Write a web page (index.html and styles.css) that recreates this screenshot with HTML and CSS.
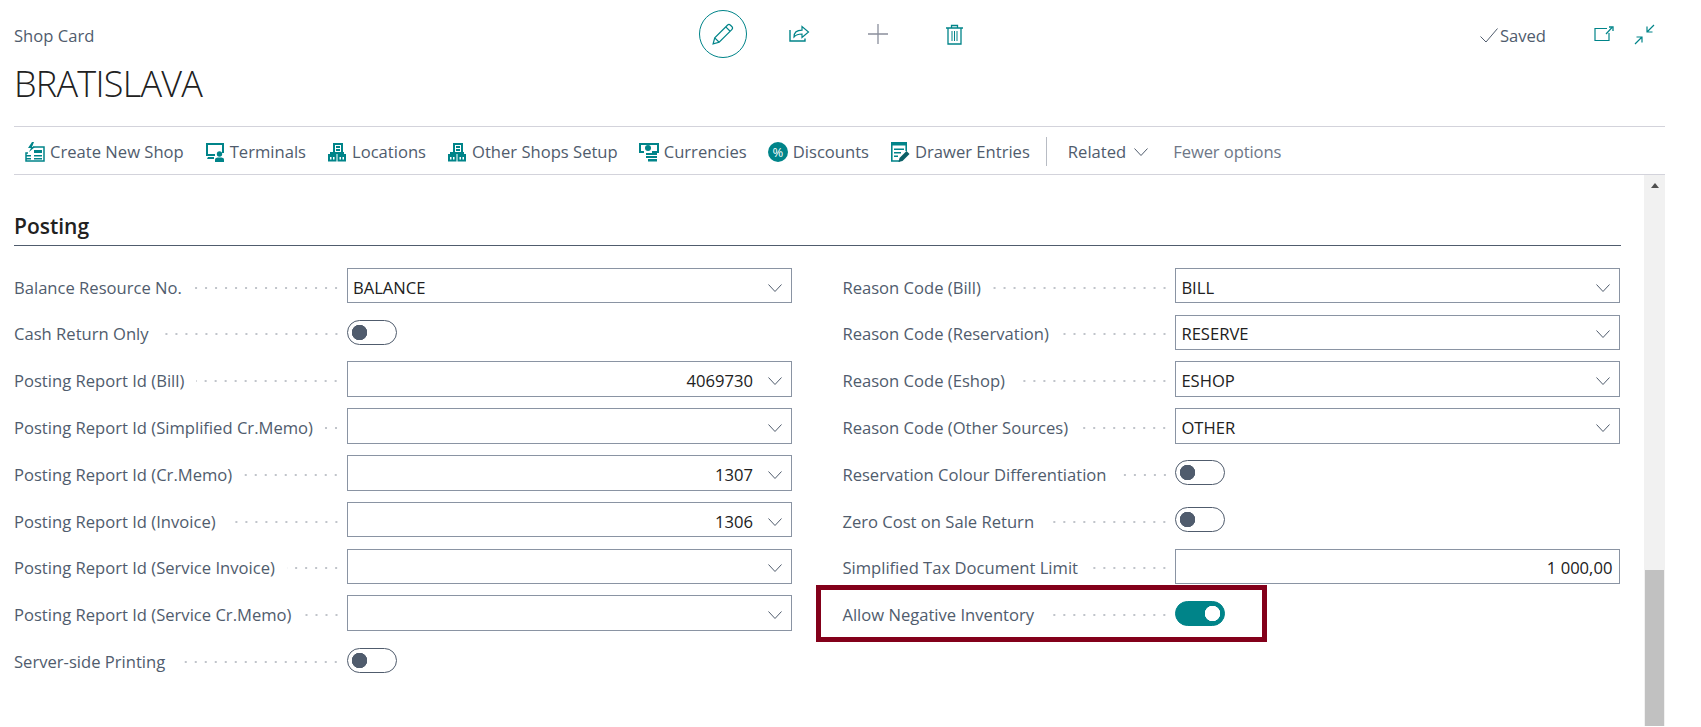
FILE: index.html
```html
<!DOCTYPE html>
<html lang="en">
<head>
  <meta charset="UTF-8">
  <title>Shop Card - BRATISLAVA</title>
  <link rel="stylesheet" href="styles.css">
</head>
<body>
  <svg class="sprite" width="0" height="0">
    <symbol id="chevron" viewBox="0 0 14 8"><path d="M.5.5 7 7.5 13.5.5" fill="none" stroke="currentColor" stroke-width="1"/></symbol>
    <symbol id="blocks" viewBox="0 0 20 20"><path d="M6 1h10v9h-2V3H8v7H6z" fill="currentColor"/><path d="M9 4h4v2H9zM9 7h4v2H9z" fill="currentColor"/><path d="M3 10h14v2H3z" fill="currentColor"/><path d="M1 12h8.500v7.500H1zM10.500 12H19v7.500h-8.500z" fill="currentColor"/><path d="M3 15h1.500v2.500H3zM6 15h1.500v2.500H6zM12.500 15H14v2.500h-1.500zM15.500 15H17v2.500h-1.500z" fill="#fff"/></symbol>
  </svg>

  <!-- Title bar -->
  <header class="page-head">
    <div class="head-left">
      <div class="caption">Shop Card</div>
      <h1>BRATISLAVA</h1>
    </div>
    <div class="head-actions">
      <span class="edit-btn">
        <svg width="22" height="22" viewBox="0 0 20 20" fill="none" stroke="currentColor" stroke-width="1.1"><path d="M1 19l1.5-5.5L14 2a2 2 0 0 1 2.8 0L18 3.2a2 2 0 0 1 0 2.8L6.5 17.5zM12.5 3.5l4 4M2.5 13.5l4 4"/></svg>
      </span>
      <svg class="act-share" width="21" height="18" viewBox="0 0 21 18" fill="none" stroke="currentColor" stroke-width="1.4"><path d="M1 6v11h15v-2.500"/><path d="M5 13c0-4.500 3-6.800 8-6.800V2.500l6.500 5.500L13 13.500V10c-4 0-6 .7-8 3z" stroke-width="1.200"/></svg>
      <svg class="act-plus" width="20" height="20" viewBox="0 0 20 20" stroke="#8a8f9c" stroke-width="1.300"><path d="M0 10h20M10 0v20"/></svg>
      <svg class="act-trash" width="17" height="21" viewBox="0 0 17 21" fill="none" stroke="currentColor" stroke-width="1.300"><path d="M0 4h17M5.500 4V1.500h6V4M2 4v16h13V4"/><path d="M6 7v10M8.500 7v10M11 7v10" stroke-width="1"/></svg>
    </div>
    <div class="head-right">
      <span class="saved">
        <svg width="18" height="15" viewBox="0 0 18 15" fill="none" stroke="currentColor" stroke-width="1"><path d="M.5 8.500 6 14 17.500.5"/></svg>
        Saved
      </span>
      <svg class="win-open" width="20" height="15" viewBox="0 0 20 15" fill="none" stroke="currentColor" stroke-width="1.200"><path d="M13 2.500H1v12h14V7"/><path d="M12 8l6-6.500"/><path d="M15 1h4v4" stroke-width="1.300"/></svg>
      <svg class="win-collapse" width="21" height="21" viewBox="0 0 21 21" fill="none" stroke="currentColor" stroke-width="1.200"><path d="M20 1l-7 7M13 2.500V8h5.500"/><path d="M1 20l7-7M8 18.500V13H2.500"/></svg>
    </div>
  </header>

  <!-- Action bar -->
  <nav class="toolbar">
    <span class="tool">
      <svg width="20" height="20" viewBox="0 0 20 20"><path d="M7 0 3 6h3L4 10l6-5H7l2-5z" fill="currentColor"/><path d="M8 5h11v14H1v-8h2" fill="none" stroke="currentColor" stroke-width="1.500"/><path d="M1 13h5v1.500H1zM1 16h5v1.500H1zM9 8h8v3H9zM9 13h8v1.500H9zM9 16h8v1.500H9z" fill="currentColor"/></svg>
      Create New Shop
    </span>
    <span class="tool">
      <svg width="20" height="20" viewBox="0 0 20 20"><path d="M1 1h18v10h-2V3H3v9h7v2H1z" fill="currentColor"/><path d="M3 15h6v2H2z" fill="currentColor"/><circle cx="14.500" cy="12" r="2.700" fill="currentColor"/><path d="M10 20v-2.500c0-1.500 1.500-2 4.500-2s4.500.5 4.500 2V20z" fill="currentColor"/></svg>
      Terminals
    </span>
    <span class="tool">
      <svg width="20" height="20"><use href="#blocks"/></svg>
      Locations
    </span>
    <span class="tool">
      <svg width="20" height="20"><use href="#blocks"/></svg>
      Other Shops Setup
    </span>
    <span class="tool">
      <svg width="20" height="20" viewBox="0 0 20 20"><path d="M0 1h20v10h-7V9h5V3H2v6h3v2H0z" fill="currentColor"/><circle cx="9" cy="6" r="3" fill="currentColor"/><path d="M7 11h11v2H7zM7 14h11v2H7zM9 17h9v2.500H9z" fill="currentColor"/></svg>
      Currencies
    </span>
    <span class="tool">
      <span class="pct">%</span>
      Discounts
    </span>
    <span class="tool">
      <svg width="20" height="20" viewBox="0 0 20 20"><path d="M1 0h16v3.500H1z" fill="currentColor"/><path d="M1.800 3v16h8M16.200 3v6" fill="none" stroke="currentColor" stroke-width="1.600"/><path d="M4 6.500h10V8H4zM4 10h7v1.500H4zM4 13.500h4V15H4z" fill="currentColor"/><path d="M8.500 20l1-4 7-7 3 3-7 7z" fill="#0b5f66"/></svg>
      Drawer Entries
    </span>
    <span class="tool-sep"></span>
    <span class="tool related">
      Related
      <svg class="rel-chev" width="14" height="8"><use href="#chevron"/></svg>
    </span>
    <span class="tool fewer">Fewer options</span>
  </nav>

  <div class="page-body">
    <main class="content">
      <h2>Posting</h2>
      <div class="form-grid">
        <div class="row"><label>Balance Resource No.</label><i class="dots"></i><div class="field"><span class="val">BALANCE</span><svg class="chev"><use href="#chevron"/></svg></div></div>
        <div class="row"><label>Reason Code (Bill)</label><i class="dots"></i><div class="field"><span class="val">BILL</span><svg class="chev"><use href="#chevron"/></svg></div></div>

        <div class="row"><label>Cash Return Only</label><i class="dots"></i><span class="toggle"></span></div>
        <div class="row"><label>Reason Code (Reservation)</label><i class="dots"></i><div class="field"><span class="val">RESERVE</span><svg class="chev"><use href="#chevron"/></svg></div></div>

        <div class="row"><label>Posting Report Id (Bill)</label><i class="dots"></i><div class="field"><span class="val num">4069730</span><svg class="chev"><use href="#chevron"/></svg></div></div>
        <div class="row"><label>Reason Code (Eshop)</label><i class="dots"></i><div class="field"><span class="val">ESHOP</span><svg class="chev"><use href="#chevron"/></svg></div></div>

        <div class="row"><label>Posting Report Id (Simplified Cr.Memo)</label><i class="dots"></i><div class="field"><span class="val"></span><svg class="chev"><use href="#chevron"/></svg></div></div>
        <div class="row"><label>Reason Code (Other Sources)</label><i class="dots"></i><div class="field"><span class="val">OTHER</span><svg class="chev"><use href="#chevron"/></svg></div></div>

        <div class="row"><label>Posting Report Id (Cr.Memo)</label><i class="dots"></i><div class="field"><span class="val num">1307</span><svg class="chev"><use href="#chevron"/></svg></div></div>
        <div class="row"><label>Reservation Colour Differentiation</label><i class="dots"></i><span class="toggle"></span></div>

        <div class="row"><label>Posting Report Id (Invoice)</label><i class="dots"></i><div class="field"><span class="val num">1306</span><svg class="chev"><use href="#chevron"/></svg></div></div>
        <div class="row"><label>Zero Cost on Sale Return</label><i class="dots"></i><span class="toggle"></span></div>

        <div class="row"><label>Posting Report Id (Service Invoice)</label><i class="dots"></i><div class="field"><span class="val"></span><svg class="chev"><use href="#chevron"/></svg></div></div>
        <div class="row"><label>Simplified Tax Document Limit</label><i class="dots"></i><div class="field"><span class="val num">1 000,00</span></div></div>

        <div class="row"><label>Posting Report Id (Service Cr.Memo)</label><i class="dots"></i><div class="field"><span class="val"></span><svg class="chev"><use href="#chevron"/></svg></div></div>
        <div class="row highlighted"><label>Allow Negative Inventory</label><i class="dots"></i><span class="toggle on"></span></div>

        <div class="row"><label>Server-side Printing</label><i class="dots"></i><span class="toggle"></span></div>
      </div>
    </main>

    <!-- Scrollbar -->
    <div class="scrollbar">
      <div class="scroll-arrow"></div>
      <div class="scroll-thumb"></div>
    </div>
  </div>
</body>
</html>
```

FILE: styles.css
```css
/* General styling */
html, body {
  margin: 0;
  height: 727px;
  overflow: hidden;
  background-color: #fff;
}

body {
  width: 1701px;
  font-family: 'Open Sans', 'Noto Sans', sans-serif;
  font-size: 16.6px;
  color: #505c6d;
}

.sprite {
  position: absolute;
}

/* Title bar */
.page-head {
  display: flex;
  height: 126px;
  padding-left: 14px;
  color: #008489;
}

.head-left {
  width: 685px;
}

.caption {
  margin-top: 24px;
  line-height: 24px;
  color: #505c6d;
}

h1 {
  margin: 11px 0 0;
  font-size: 36px;
  line-height: 50px;
  font-weight: 300;
  letter-spacing: -0.75px;
  color: #212121;
}

.head-actions {
  display: flex;
  align-items: center;
  height: 48px;
  margin-top: 10px;
}

.edit-btn {
  display: flex;
  align-items: center;
  justify-content: center;
  box-sizing: border-box;
  width: 48px;
  height: 48px;
  border: 1.5px solid #008489;
  border-radius: 50%;
}

.act-share {
  margin-left: 42px;
  margin-top: -2px;
}

.act-plus {
  margin-left: 58px;
}

.act-trash {
  margin-left: 58px;
}

.head-right {
  display: flex;
  align-items: flex-start;
  margin-left: auto;
  margin-right: 46px;
  padding-top: 24px;
}

.saved {
  display: flex;
  align-items: center;
  gap: 2px;
  margin-right: 48px;
  line-height: 23px;
  color: #505c6d;
}

.win-open {
  margin-top: 2px;
}

.win-collapse {
  margin-left: 20px;
}

/* Action bar */
.toolbar {
  display: flex;
  align-items: center;
  gap: 21px;
  height: 45px;
  margin-left: 14px;
  margin-right: 36px;
  padding-top: 2px;
  padding-left: 11px;
  border-top: 1px solid #d3d3db;
  border-bottom: 1px solid #d3d3db;
  color: #008489;
}

.tool {
  display: flex;
  align-items: center;
  gap: 5px;
  color: #505c6d;
  white-space: nowrap;
}

.tool svg,
.pct {
  flex: none;
  color: #008489;
}

.pct {
  width: 20px;
  height: 20px;
  border-radius: 50%;
  background-color: #008489;
  color: #fff;
  font-size: 13px;
  line-height: 20px;
  text-align: center;
}

.tool-sep {
  width: 1px;
  height: 29px;
  margin-left: -5px;
  background-color: #b8bcc4;
}

.tool .rel-chev {
  color: #505c6d;
  margin-left: 3px;
}

.fewer {
  color: #6e7787;
  margin-left: 4px;
  letter-spacing: -0.1px;
}

/* Form area */
.page-body {
  display: flex;
  height: 551px;
  padding-right: 36px;
}

.content {
  flex: 1;
  padding: 0 23px 0 14px;
}

h2 {
  margin: 0;
  padding-top: 35px;
  height: 35px;
  font-size: 21px;
  line-height: 32px;
  font-weight: 600;
  color: #212121;
  border-bottom: 1px solid #505c6d;
}

.form-grid {
  display: grid;
  grid-template-columns: 778px 778px;
  grid-auto-rows: 46.8px;
  column-gap: 50.4px;
  margin-top: 16.3px;
}

.row {
  display: flex;
  align-items: center;
  position: relative;
}

label {
  padding-top: 3px;
  white-space: nowrap;
}

.dots {
  flex: 1;
  height: 4px;
  margin: 4px 6px 0 12px;
  background-image: radial-gradient(circle, #c0c4ca 0.9px, transparent 1.1px);
  background-size: 10px 4px;
  background-position: right center;
}

.field {
  display: flex;
  align-items: center;
  flex: none;
  box-sizing: border-box;
  width: 445px;
  height: 35.6px;
  padding: 0 5px;
  border: 1px solid #8a94a3;
  color: #212121;
}

.val {
  flex: 1;
  padding-top: 3px;
}

.val.num {
  padding-right: 2px;
  text-align: right;
}

.chev {
  flex: none;
  width: 14px;
  height: 8px;
  margin: 4px 4px 0 13px;
  color: #505c6d;
}

/* Toggles */
.toggle {
  flex: none;
  box-sizing: border-box;
  display: flex;
  align-items: center;
  width: 445px;
}

.toggle::before {
  content: "";
  box-sizing: border-box;
  display: block;
  width: 50px;
  height: 25px;
  border: 1px solid #505c6d;
  border-radius: 13px;
  background-image: radial-gradient(circle at 11.500px center, #505c6d 7.500px, transparent 8px);
}

.toggle.on::before {
  border-color: #008489;
  background-color: #008489;
  background-image: radial-gradient(circle at 36.500px center, #fff 7.500px, transparent 8px);
}

/* Red marker round the changed setting */
.highlighted::after {
  content: "";
  position: absolute;
  left: -26px;
  right: 353px;
  top: -5px;
  bottom: -5px;
  border: 5px solid #83001a;
}

/* Scrollbar */
.scrollbar {
  display: flex;
  flex-direction: column;
  width: 21px;
  margin-left: auto;
  background-color: #f1f1f1;
}

.scroll-arrow {
  width: 0;
  height: 0;
  margin: 8px auto 0;
  border-left: 4px solid transparent;
  border-right: 4px solid transparent;
  border-bottom: 5px solid #505050;
}

.scroll-thumb {
  margin: auto 1px 0;
  height: 156px;
  background-color: #c1c1c1;
}
```
